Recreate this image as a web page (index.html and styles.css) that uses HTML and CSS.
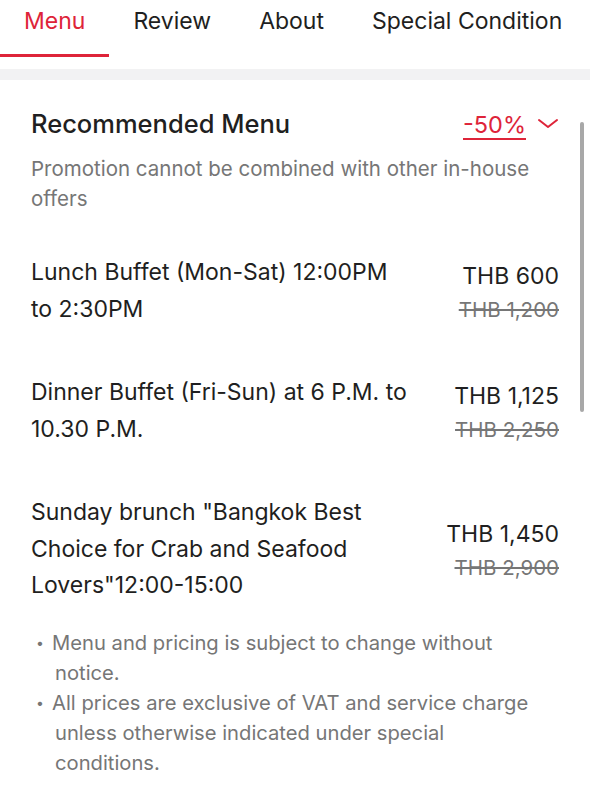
FILE: index.html
```html
<!DOCTYPE html>
<html>
<head>
<meta charset="utf-8" />
<title>Menu</title>
<link rel="stylesheet" href="styles.css">
</head>
<body>

<div class="tabs">
	<div class="tab active">Menu</div>
	<div class="tab">Review</div>
	<div class="tab">About</div>
	<div class="tab">Special Condition</div>
</div>

<div class="divider"></div>

<div class="content">
	<div class="scrollbar"></div>

	<div class="head">
		<h2>Recommended Menu</h2>
		<div class="discount">
			<span class="percent">-50%</span>
			<svg width="22" height="12" viewBox="0 0 22 12"><path d="M2 2 L11 9 L20 2" fill="none" stroke="#de2439" stroke-width="2" stroke-linecap="round" stroke-linejoin="round"/></svg>
		</div>
	</div>

	<p class="note">Promotion cannot be combined with other in-house offers</p>

	<div class="item">
		<div class="name">Lunch Buffet (Mon-Sat) 12:00PM to 2:30PM</div>
		<div class="price">
			<div class="now">THB 600</div>
			<div class="was">THB 1,200</div>
		</div>
	</div>

	<div class="item">
		<div class="name">Dinner Buffet (Fri-Sun) at 6 P.M. to 10.30 P.M.</div>
		<div class="price">
			<div class="now">THB 1,125</div>
			<div class="was">THB 2,250</div>
		</div>
	</div>

	<div class="item">
		<div class="name">Sunday brunch "Bangkok Best Choice for Crab and Seafood Lovers"12:00-15:00</div>
		<div class="price">
			<div class="now">THB 1,450</div>
			<div class="was">THB 2,900</div>
		</div>
	</div>

	<ul class="terms">
		<li>Menu and pricing is subject to change without notice.</li>
		<li>All prices are exclusive of VAT and service charge unless otherwise indicated under special conditions.</li>
	</ul>
</div>

</body>
</html>
```

FILE: styles.css
```css
body {
	margin: 0;
	background: #fff;
	font-family: Inter, "Noto Sans", sans-serif;
	color: #1f1f21;
}

.tabs {
	display: flex;
	height: 57px;
}

.tab {
	padding: 0 24px;
	font-size: 23px;
	line-height: 42px;
	color: #1f1f21;
	border-bottom: 3px solid transparent;
	box-sizing: border-box;
	height: 57px;
}

.tab.active {
	color: #de2439;
	border-bottom-color: #de2439;
}

.divider {
	height: 11px;
	margin-top: 12px;
	background: #f2f2f3;
}

.content {
	position: relative;
	padding: 28px 31px 30px 31px;
}

.scrollbar {
	position: absolute;
	left: 580px;
	top: 42px;
	width: 4px;
	height: 290px;
	border-radius: 2px;
	background: #a8a8a8;
}

.head {
	display: flex;
	justify-content: space-between;
	align-items: center;
}

h2 {
	margin: 0;
	font-size: 25.5px;
	font-weight: 500;
	line-height: 32px;
}

.discount {
	display: flex;
	align-items: center;
	gap: 11px;
	color: #de2439;
	font-size: 23.5px;
}

.percent {
	text-decoration: underline;
	text-underline-offset: 5px;
	text-decoration-thickness: 1.5px;
}

.note {
	margin: 14px 0 0 0;
	font-size: 20.5px;
	line-height: 30px;
	color: #767676;
}

.item {
	display: flex;
	justify-content: space-between;
	align-items: center;
	margin-top: 40px;
}

.item + .item {
	margin-top: 47px;
}

.name {
	width: 380px;
	font-size: 23px;
	line-height: 36.5px;
}

.price {
	text-align: right;
	padding-top: 4px;
}

.now {
	font-size: 23px;
	line-height: 34px;
}

.was {
	font-size: 20.5px;
	line-height: 34px;
	color: #767676;
	text-decoration: line-through;
}

.terms {
	margin: 24px 0 0 0;
	padding: 0 25px 0 24px;
	font-size: 20.2px;
	line-height: 30px;
	color: #767676;
	list-style: none;
}

.terms li {
	position: relative;
	text-indent: -3px;
}

.terms li:before {
	content: "•";
	position: absolute;
	left: -16px;
	font-size: 14px;
}
```
